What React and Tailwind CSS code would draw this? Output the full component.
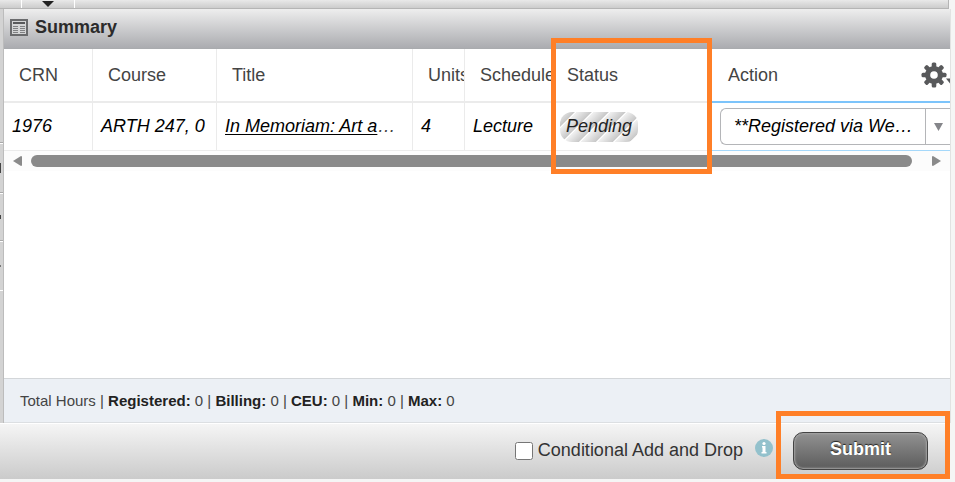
import React from 'react';

const totals = [
  { label: 'Registered', value: 0 },
  { label: 'Billing', value: 0 },
  { label: 'CEU', value: 0 },
  { label: 'Min', value: 0 },
  { label: 'Max', value: 0 },
];

const columns = [
  { name: 'CRN', width: 'w-[89px]' },
  { name: 'Course', width: 'w-[124px]' },
  { name: 'Title', width: 'w-[196px]' },
  { name: 'Units', width: 'w-[52px]' },
  { name: 'Schedule', width: 'w-[87px]' },
];

const TableIcon = () => (
  <svg width="18" height="17" viewBox="0 0 18 17" aria-hidden="true">
    <rect x="1" y="1" width="16" height="15" fill="#d4d5d6" stroke="#6a6b6d" strokeWidth="2" />
    <rect x="3" y="3" width="12" height="2" fill="#58595b" />
    <path
      d="M3 7.5h5M10 7.5h5M3 9.5h5M10 9.5h5M3 11.5h5M10 11.5h5M3 13.5h5M10 13.5h5"
      stroke="#808183"
    />
  </svg>
);

const GearIcon = () => (
  <svg width="29" height="26" viewBox="0 0 29 26" aria-hidden="true">
    <g fill="#58595b">
      {[0, 45, 90, 135].map((angle) => (
        <rect
          key={angle}
          x="10.700"
          y="0.500"
          width="4.600"
          height="25"
          rx="1.500"
          transform={`rotate(${angle} 13 13)`}
        />
      ))}
      <circle cx="13" cy="13" r="9" />
      <path d="M25 16.500h8l-4 5z" />
    </g>
    <circle cx="13" cy="13" r="3.800" fill="#fff" />
  </svg>
);

const InfoIcon = () => (
  <svg width="18" height="18" viewBox="0 0 18 18" aria-hidden="true">
    <circle cx="9" cy="9" r="9" fill="#93c1cc" />
    <circle cx="9" cy="4.500" r="1.600" fill="#fff" />
    <path d="M7 7h3.500v6h1v1.500h-5v-1.500h1v-4.500h-.5z" fill="#fff" />
  </svg>
);

const TopStrip = () => (
  <div className="flex h-[9px] mr-1.5 border-b border-r border-[#b5b5b5] bg-linear-to-b from-[#e9e9e9] to-[#cccccc]">
    <div className="w-[22px] border-r border-white" />
    <button
      type="button"
      aria-label="Collapse panel"
      className="flex w-[53px] items-center justify-center border-r border-white"
    >
      <svg width="12" height="6" viewBox="0 0 12 6" aria-hidden="true">
        <path d="M0 0h12l-6 6z" fill="#222" />
      </svg>
    </button>
  </div>
);

const SideStrip = () => (
  <div className="flex w-1 shrink-0 flex-col border-r border-[#bcbcbc] bg-[#d3d3d3]">
    <div className="h-[134px] border-b border-[#a9a9a9]" />
    <div className="flex h-[50px] items-center border-y border-t-white border-b-[#a9a9a9]">
      <div className="h-2.5 w-px bg-[#444]" />
    </div>
    <div className="flex h-12 items-center border-y border-t-white border-b-[#a9a9a9]">
      <div className="h-1 w-px bg-[#444]" />
    </div>
    <div className="flex h-[50px] items-center border-y border-white">
      <div className="h-0.5 w-px bg-[#777]" />
    </div>
  </div>
);

const SummaryTable = () => (
  <table className="w-full table-fixed border-separate border-spacing-0 text-left text-[18px]">
    <thead>
      <tr className="h-[54px] text-[#444]">
        {columns.map((col) => (
          <th
            key={col.name}
            className={`${col.width} overflow-hidden border-b-2 border-r border-[#ebebeb] pl-[15px] font-normal whitespace-nowrap`}
          >
            {col.name}
          </th>
        ))}
        <th className="relative w-[160px] border-b-2 border-[#ebebeb] pl-[15px] font-normal">
          Status
          <div className="pointer-events-none absolute -top-[11px] -left-px z-10 h-[136px] w-[161px] border-5 border-[#ff7f27]" />
        </th>
        <th className="border-b-2 border-[#7cc4fb] pl-4 font-normal">
          <div className="flex items-center justify-between">
            Action
            <button type="button" aria-label="Table settings">
              <GearIcon />
            </button>
          </div>
        </th>
      </tr>
    </thead>
    <tbody>
      <tr className="h-12 text-black italic">
        <td className="border-r border-b border-[#ebebeb] pl-2">1976</td>
        <td className="border-r border-b border-[#ebebeb] pl-2 whitespace-nowrap">ARTH 247, 0</td>
        <td className="truncate border-r border-b border-[#ebebeb] pr-3 pl-2 text-[#444]">
          <a href="#title" className="text-black underline underline-offset-2">
            In Memoriam: Art and M
          </a>
        </td>
        <td className="border-r border-b border-[#ebebeb] pl-2">4</td>
        <td className="border-b border-[#ebebeb] pl-2">Lecture</td>
        <td className="border-b border-[#ebebeb] pl-2">
          <span className="inline-flex h-[30px] items-center rounded-xl bg-[repeating-linear-gradient(135deg,#f0f0f0_0px,#c9c9c9_10px,#ffffff_11px,#ffffff_12px)] px-1.5 text-[#222]">
            Pending
          </span>
        </td>
        <td className="border-b border-[#a5d8fa] pl-2">
          <div className="relative h-[37px] rounded-l-md border border-r-0 border-[#b4b5b8]">
            <select
              aria-label="Action"
              className="h-full w-full appearance-none truncate pr-8 pl-[13px] italic outline-none"
            >
              <option>**Registered via Web**</option>
            </select>
            <div className="pointer-events-none absolute inset-y-0 right-0 flex w-[25px] items-center justify-center border-l border-[#b4b5b8]">
              <svg width="9" height="8" viewBox="0 0 9 8" aria-hidden="true">
                <path d="M0 0h9l-4.500 8z" fill="#85868a" />
              </svg>
            </div>
          </div>
        </td>
      </tr>
    </tbody>
  </table>
);

const ScrollBar = () => (
  <div className="flex h-5 items-center bg-[#fcfcfc] px-[9px]">
    <button type="button" aria-label="Scroll left">
      <svg width="9" height="10" viewBox="0 0 9 10" aria-hidden="true">
        <path d="M9 1v8q0 1-1 1L0 5l8-5q1 0 1 1z" fill="#8a8a8a" />
      </svg>
    </button>
    <div className="mr-5 ml-[9px] h-3 flex-1 rounded-full bg-[#8a8a8a]" />
    <button type="button" aria-label="Scroll right">
      <svg width="9" height="10" viewBox="0 0 9 10" aria-hidden="true">
        <path d="M0 1v8q0 1 1 1l8-5-8-5q-1 0-1 1z" fill="#8a8a8a" />
      </svg>
    </button>
  </div>
);

const ActionBar = () => (
  <div className="mr-[5px] flex h-14 items-center justify-end border-t border-white bg-linear-to-b from-[#f5f5f5] to-[#cbcbcb] pr-[22px] pb-0.5 text-[18px] text-[#333]">
    <label className="flex items-center gap-[5px]">
      <input type="checkbox" className="size-[18px]" />
      Conditional Add and Drop
    </label>
    <button type="button" aria-label="More information" className="mb-1.5 ml-3">
      <InfoIcon />
    </button>
    <div className="relative ml-5">
      <button
        type="submit"
        className="h-[38px] w-[135px] rounded-[10px] border border-[#444] bg-linear-to-b from-[#929292] to-[#5c5c5c] pb-0.5 font-bold text-white shadow-[inset_0_0_2px_1px_#a5a5a5] text-shadow-[0_-1px_1px_#222]"
      >
        Submit
      </button>
      <div className="pointer-events-none absolute -top-[21px] -right-[22px] -bottom-[9px] -left-[17px] border-5 border-[#ff7f27]" />
    </div>
  </div>
);

export default function App() {
  return (
    <div className="flex min-h-screen flex-col overflow-hidden bg-[#f5f5f5] pb-[3px] font-['Liberation_Sans',Arial,sans-serif]">
      <TopStrip />
      <div className="flex grow">
        <SideStrip />
        <main className="mr-1 flex min-w-0 grow flex-col border-r border-[#e2e2e2] bg-white">
          <header className="flex h-10 items-center gap-[7px] border-b border-[#a9abae] bg-linear-to-b from-[#eeeeee] to-[#abacb0] pb-0.5 pl-1.5">
            <TableIcon />
            <h1 className="text-[18px] font-bold text-[#2b2b2b]">Summary</h1>
          </header>
          <SummaryTable />
          <ScrollBar />
          <div className="grow" />
          <footer className="flex h-[45px] items-center border-y border-t-[#d3d6d9] border-b-[#dcdfe2] bg-[#ecf0f5] pt-0.5 pl-4 text-[15px] text-[#444]">
            <p>
              Total Hours
              {totals.map((item) => (
                <span key={item.label}>
                  {' | '}
                  <strong className="text-[#222]">{item.label}:</strong> {item.value}
                </span>
              ))}
            </p>
          </footer>
        </main>
      </div>
      <ActionBar />
    </div>
  );
}
